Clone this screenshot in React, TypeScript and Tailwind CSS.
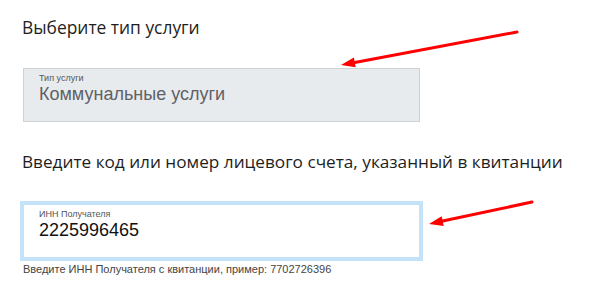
import React from "react";

const Arrow = ({ x1, y1, x2, y2 }: { x1: number; y1: number; x2: number; y2: number }) => {
  // наконечник стрелки в точке (x2, y2)
  const a = Math.atan2(y2 - y1, x2 - x1);
  const len = 14;
  const w = 5;
  const bx = x2 - len * Math.cos(a);
  const by = y2 - len * Math.sin(a);
  const px = -Math.sin(a) * w;
  const py = Math.cos(a) * w;
  return (
    <g>
      <line x1={x1} y1={y1} x2={bx} y2={by} stroke="#ff0000" strokeWidth={3} strokeLinecap="round" />
      <polygon points={`${x2},${y2} ${bx + px},${by + py} ${bx - px},${by - py}`} fill="#ff0000" />
    </g>
  );
};

export default function App() {
  return (
    <div className="relative w-[600px] h-[295px] bg-white overflow-hidden">
      <div className="pl-[22px] pt-[15px]">
        <h2 className="text-[17.4px] leading-[24px] text-[#1e1e1e] font-['Open_Sans',sans-serif]">
          Выберите тип услуги
        </h2>

        <div className="mt-[29px] ml-px w-[397px] h-[54px] bg-[#e8ebee] border border-[#cfd2d5] pl-[15px] pt-[4px] font-['Liberation_Sans',Arial,sans-serif]">
          <div className="text-[9px] leading-[11px] text-[#555]">Тип услуги</div>
          <div className="text-[18px] leading-[20px] text-[#5e6267]">Коммунальные услуги</div>
        </div>

        <h2 className="mt-[28px] text-[17.2px] leading-[24px] text-[#1e1e1e] font-['Open_Sans',sans-serif]">
          Введите код или номер лицевого счета, указанный в квитанции
        </h2>

        <div className="mt-[30px] ml-px w-[397px] h-[54px] bg-white border border-[#c4e3f9] ring-[3px] ring-[#c4e3f9] pl-[15px] pt-[4px] font-['Liberation_Sans',Arial,sans-serif]">
          <div className="text-[9px] leading-[11px] text-[#555]">ИНН Получателя</div>
          <div className="text-[18px] leading-[20px] text-[#111]">2225996465</div>
        </div>

        <p className="mt-[5px] ml-px text-[11px] leading-[13px] text-[#444] font-['Liberation_Sans',Arial,sans-serif]">
          Введите ИНН Получателя с квитанции, пример: 7702726396
        </p>
      </div>

      <svg className="absolute inset-0 pointer-events-none" width={600} height={295}>
        <Arrow x1={517} y1={32} x2={341} y2={65} />
        <Arrow x1={532} y1={202} x2={429} y2={224} />
      </svg>
    </div>
  );
}
